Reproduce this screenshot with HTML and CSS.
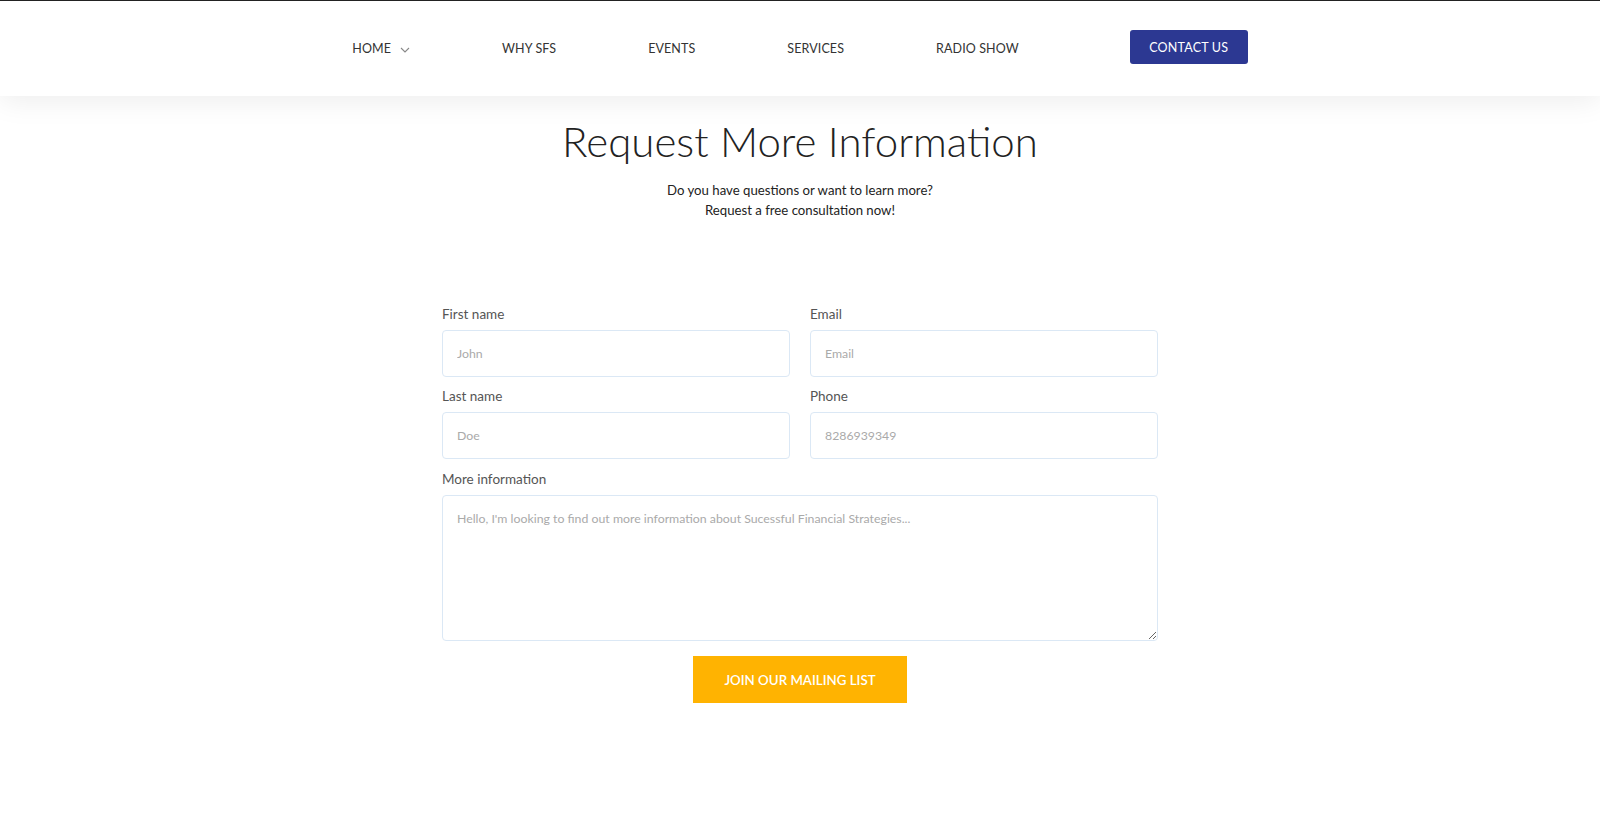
FILE: index.html
```html
<!DOCTYPE html>
<html lang="en">
<head>
<meta charset="utf-8">
<title>Request More Information</title>
<link rel="stylesheet" href="styles.css">
</head>
<body>
<header class="site-header">
  <nav class="nav">
    <a class="nav-link" href="#">HOME
      <svg class="chev" width="10" height="6" viewBox="0 0 10 6"><path d="M1 1l4 4 4-4" fill="none" stroke="#888" stroke-width="1.1"/></svg>
    </a>
    <a class="nav-link" href="#">WHY SFS</a>
    <a class="nav-link" href="#">EVENTS</a>
    <a class="nav-link" href="#">SERVICES</a>
    <a class="nav-link" href="#">RADIO SHOW</a>
    <a class="nav-cta" href="#">CONTACT US</a>
  </nav>
</header>
<main class="main">
  <h1 class="title">Request More Information</h1>
  <p class="subtitle">Do you have questions or want to learn more?<br>Request a free consultation now!</p>
  <form class="form">
    <div class="field">
      <label class="label">First name</label>
      <input class="input" type="text" placeholder="John">
    </div>
    <div class="field">
      <label class="label">Email</label>
      <input class="input" type="text" placeholder="Email">
    </div>
    <div class="field">
      <label class="label">Last name</label>
      <input class="input" type="text" placeholder="Doe">
    </div>
    <div class="field">
      <label class="label">Phone</label>
      <input class="input" type="text" placeholder="8286939349">
    </div>
    <div class="field wide">
      <label class="label">More information</label>
      <textarea class="textarea" placeholder="Hello, I'm looking to find out more information about Sucessful Financial Strategies..."></textarea>
    </div>
    <div class="actions">
      <button class="submit" type="button">JOIN OUR MAILING LIST</button>
    </div>
  </form>
</main>
</body>
</html>
```

FILE: styles.css
```css
* { box-sizing: border-box; }
html, body { margin: 0; padding: 0; background: #fff; }
body {
  font-family: Lato, "Open Sans", "Liberation Sans", sans-serif;
  color: #222;
  border-top: 1px solid #222;
}
.site-header {
  height: 95px;
  background: #fff;
  box-shadow: 0 4px 28px rgba(0, 0, 0, 0.08);
  position: relative;
  z-index: 2;
}
.nav {
  height: 100%;
  display: flex;
  align-items: center;
  justify-content: center;
  gap: 92px;
}
.nav-link {
  font-size: 12.5px;
  color: #333;
  text-decoration: none;
  letter-spacing: 0.1px;
  display: flex;
  align-items: center;
  gap: 9px;
  margin-top: -1px;
}
.chev { margin-top: 3px; }
.nav-cta {
  margin-left: 19px;
  background: #2c3892;
  color: #fff;
  text-decoration: none;
  font-size: 12.5px;
  letter-spacing: 0.2px;
  width: 118px;
  height: 34px;
  display: flex;
  align-items: center;
  justify-content: center;
  border-radius: 3px;
  margin-top: -3px;
}
.main {
  padding-top: 18px;
  display: flex;
  flex-direction: column;
  align-items: center;
}
.title {
  margin: 0;
  font-size: 42px;
  font-weight: 300;
  line-height: 55px;
  color: #222;
}
.subtitle {
  margin: 11px 0 0;
  font-size: 13.2px;
  line-height: 20px;
  text-align: center;
  color: #222;
}
.form {
  margin-top: 84px;
  width: 716px;
  display: grid;
  grid-template-columns: 1fr 1fr;
  column-gap: 20px;
  row-gap: 9px;
}
.field { display: flex; flex-direction: column; }
.wide { grid-column: 1 / 3; margin-top: 1px; }
.label {
  font-size: 13.5px;
  line-height: 20px;
  color: #555;
  margin-bottom: 6px;
}
.input, .textarea {
  font-family: inherit;
  font-size: 12.3px;
  color: #333;
  border: 1px solid #dbe8f5;
  border-radius: 4px;
  padding: 0 14px;
  background: #fff;
  outline: none;
}
.input { height: 47px; }
.textarea {
  height: 146px;
  padding-top: 15px;
  resize: vertical;
}
.input::placeholder, .textarea::placeholder { color: #aaa; }
.actions {
  grid-column: 1 / 3;
  display: flex;
  justify-content: center;
  margin-top: 6px;
}
.submit {
  width: 214px;
  height: 47px;
  background: #ffb301;
  border: none;
  color: #fff;
  font-family: inherit;
  font-size: 13.3px;
  font-weight: 600;
}
```
